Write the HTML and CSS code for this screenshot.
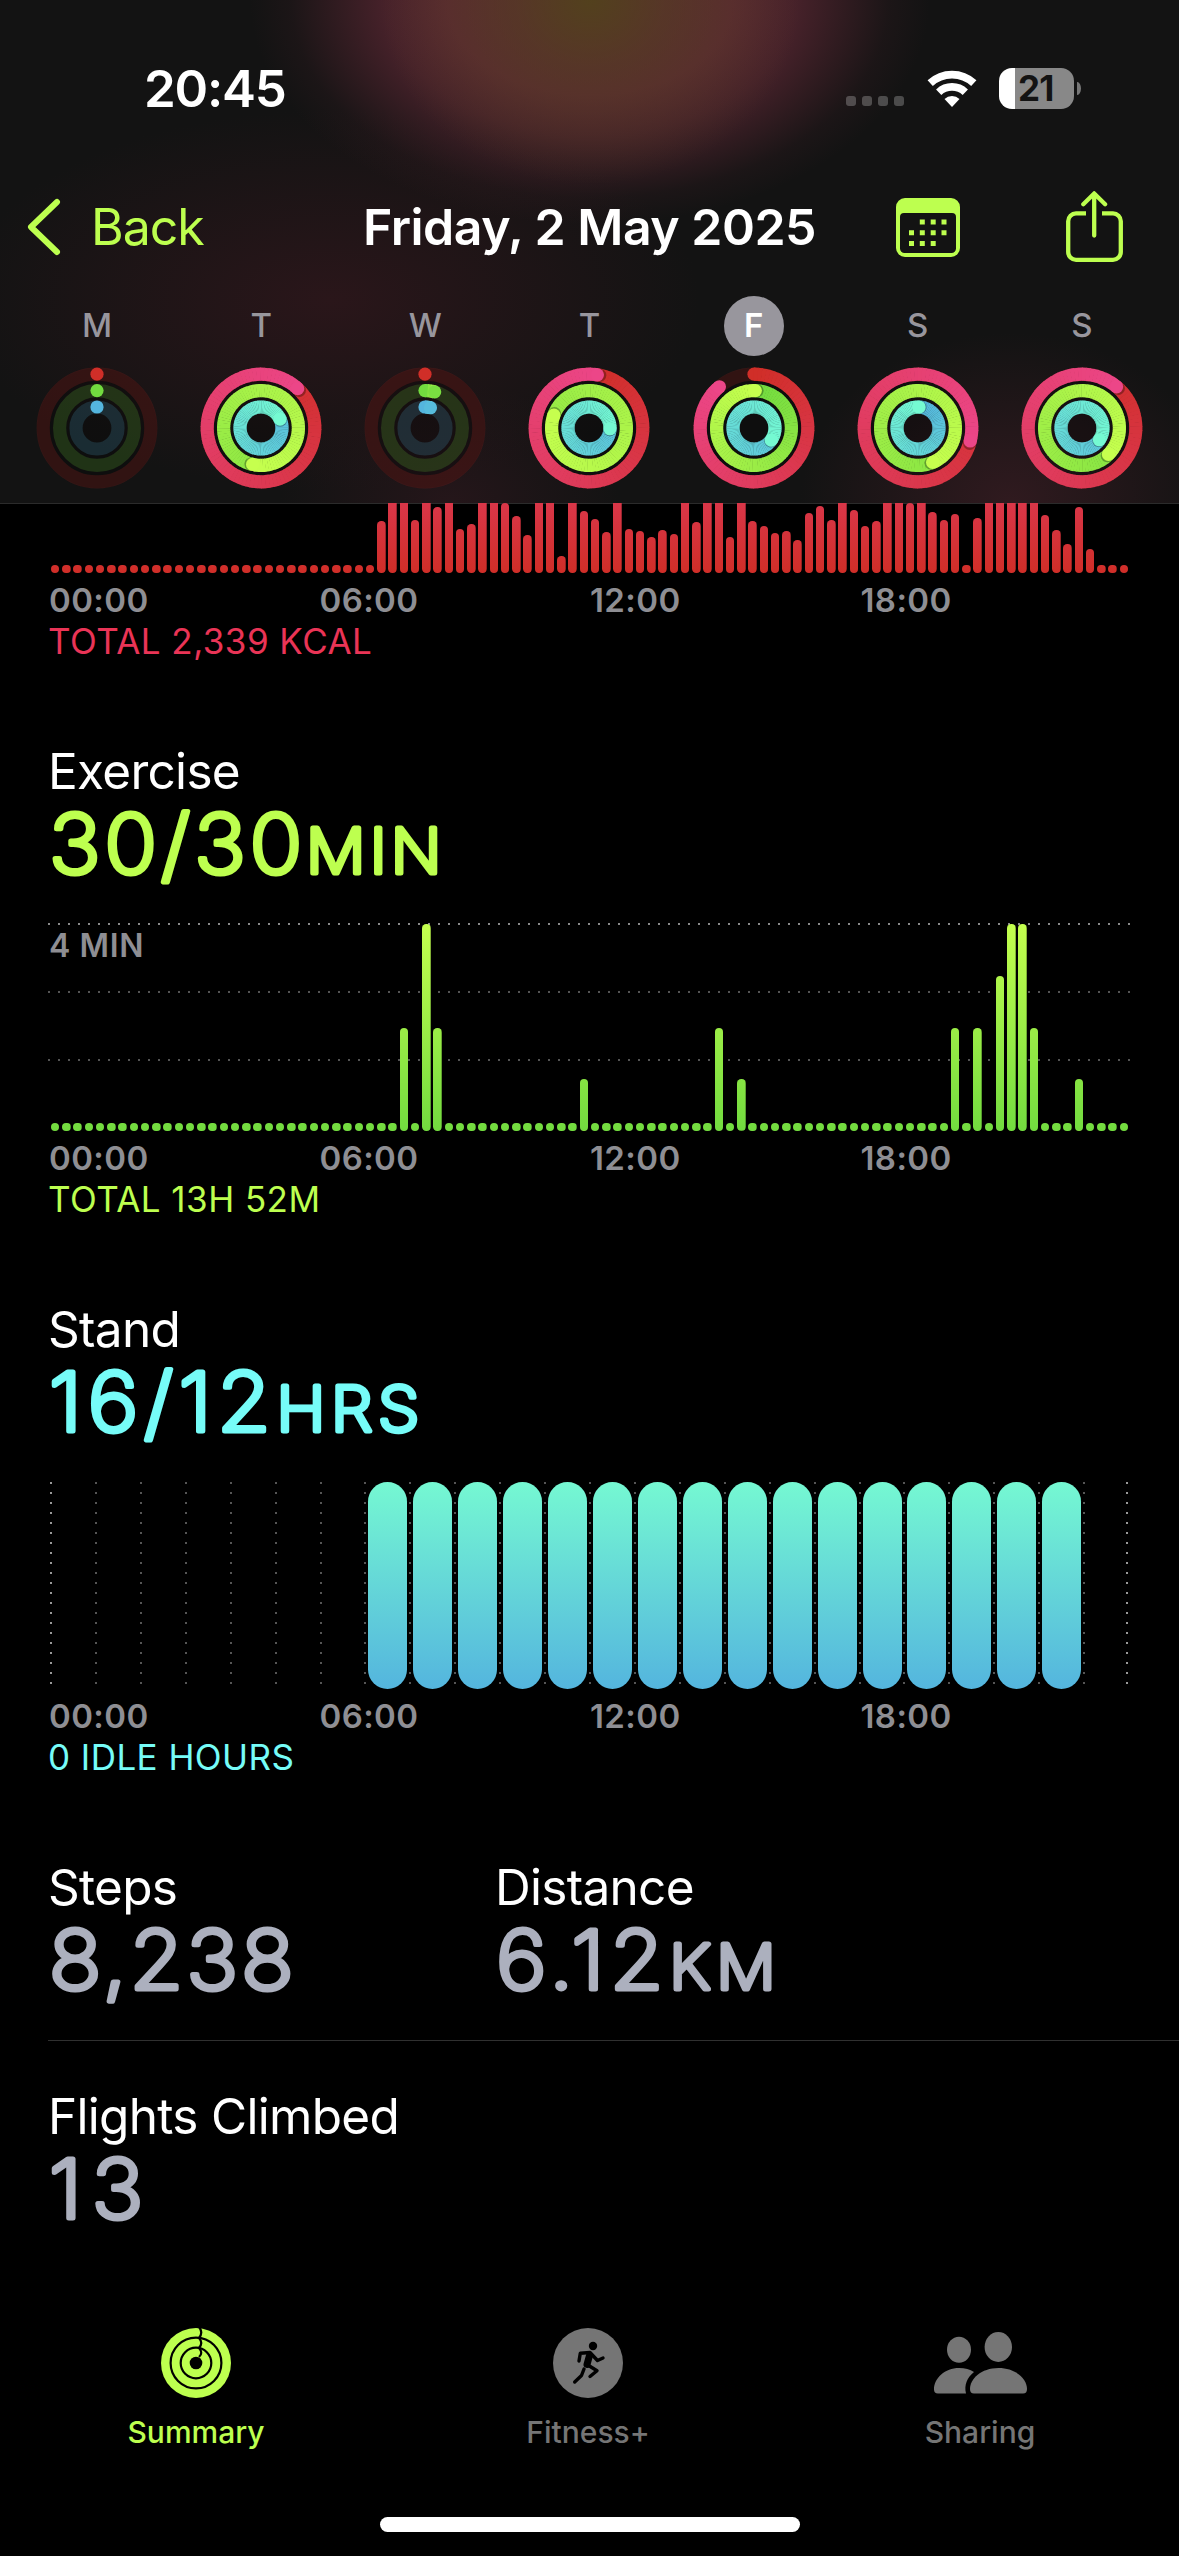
FILE: index.html
```html
<!DOCTYPE html>
<html lang="en">
<head>
  <meta charset="UTF-8">
  <meta name="viewport" content="width=device-width, initial-scale=1.0">
  <title>Activity</title>
  <link rel="stylesheet" href="styles.css">
</head>
<body>
  <header class="header">
    <div class="status-bar">
      <span class="clock">20:45</span>
      <div class="status-icons">
        <div class="signal"><i></i><i></i><i></i><i></i></div>
        <svg class="wifi" viewBox="0 0 50 37" fill="none" stroke="#fff" stroke-width="7.7">
          <path d="M3.2 13.1A32 32 0 0 1 46.8 13.1"/>
          <path d="M11.7 22.2A19.5 19.5 0 0 1 38.3 22.2"/>
          <path d="M25 37L17.5 28.9A10.9 10.9 0 0 1 32.5 28.9Z" fill="#fff" stroke="none"/>
        </svg>
        <div class="battery"><span>21</span></div>
        <div class="battery-tip"></div>
      </div>
    </div>

    <nav class="nav-bar">
      <a class="back">
        <svg viewBox="0 0 34 58" fill="none" stroke="currentColor" stroke-width="6" stroke-linecap="round" stroke-linejoin="round">
          <path d="M30 4L4 29L30 54"/>
        </svg>
        <span>Back</span>
      </a>
      <h1 class="title">Friday, 2 May 2025</h1>
      <div class="nav-icons">
        <svg class="calendar-icon" viewBox="0 0 64 59" fill="currentColor">
          <path fill-rule="evenodd" d="M9 0H55A9 9 0 0 1 64 9V50A9 9 0 0 1 55 59H9A9 9 0 0 1 0 50V9A9 9 0 0 1 9 0ZM8 15A4 4 0 0 0 4 19V50.500A4.500 4.500 0 0 0 8.500 55H55.500A4.500 4.500 0 0 0 60 50.500V19A4 4 0 0 0 56 15Z"/>
          <path d="M23.800 21.500h5v5h-5zM34.700 21.500h5v5h-5zM45.500 21.500h5v5h-5zM13 32.200h5v5h-5zM23.800 32.200h5v5h-5zM34.700 32.200h5v5h-5zM45.500 32.200h5v5h-5zM13 43h5v5h-5zM23.800 43h5v5h-5zM34.700 43h5v5h-5z"/>
        </svg>
        <svg class="share-icon" viewBox="0 0 57 72" fill="none" stroke="currentColor" stroke-width="4.300">
          <path d="M20 22.400H10A7.800 7.800 0 0 0 2.200 30.200V61A7.800 7.800 0 0 0 10 68.800H47A7.800 7.800 0 0 0 54.800 61V30.200A7.800 7.800 0 0 0 47 22.400H36"/>
          <path d="M28.200 44.500V3M17.300 13.300L28.200 2.400L39.100 13.300" stroke-linecap="round" stroke-linejoin="round"/>
        </svg>
      </div>
    </nav>

    <div class="week">
      <div class="day"><span>M</span><svg class="rings" data-rings="0,0,0"></svg></div>
      <div class="day"><span>T</span><svg class="rings" data-rings="403,553,425"></svg></div>
      <div class="day"><span>W</span><svg class="rings" data-rings="0,15,15"></svg></div>
      <div class="day"><span>T</span><svg class="rings" data-rings="369,650,452"></svg></div>
      <div class="day selected"><span>F</span><svg class="rings" data-rings="320,362,485"></svg></div>
      <div class="day"><span>S</span><svg class="rings" data-rings="464,517,363"></svg></div>
      <div class="day"><span>S</span><svg class="rings" data-rings="400,495,484"></svg></div>
    </div>
  </header>

  <main>
    <section class="move">
      <div class="chart bars clipped" id="moveChart"></div>
      <div class="hours"><span>00:00</span><span>06:00</span><span>12:00</span><span>18:00</span></div>
      <p class="total">TOTAL 2,339 KCAL</p>
    </section>

    <section class="exercise">
      <h2>Exercise</h2>
      <svg class="value" height="86"><text x="1" y="72">30/30<tspan class="unit">MIN</tspan></text></svg>
      <div class="chart bars grid-lines" id="exerciseChart"><span class="scale">4 MIN</span></div>
      <div class="hours"><span>00:00</span><span>06:00</span><span>12:00</span><span>18:00</span></div>
      <p class="total">TOTAL 13H 52M</p>
    </section>

    <section class="stand">
      <h2>Stand</h2>
      <svg class="value wide" height="86"><text x="1" y="72">16/12<tspan class="unit">HRS</tspan></text></svg>
      <div class="chart stand-chart" id="standChart"></div>
      <div class="hours"><span>00:00</span><span>06:00</span><span>12:00</span><span>18:00</span></div>
      <p class="total">0 IDLE HOURS</p>
    </section>

    <section class="stats">
      <div class="stat">
        <h2>Steps</h2>
        <svg class="value" height="86"><text x="1" y="72">8,238</text></svg>
      </div>
      <div class="stat">
        <h2>Distance</h2>
        <svg class="value wide" height="86"><text x="1" y="72">6.12<tspan class="unit">KM</tspan></text></svg>
      </div>
    </section>
    <section class="stats last">
      <div class="stat">
        <h2>Flights Climbed</h2>
        <svg class="value wide" height="86"><text x="1" y="72">13</text></svg>
      </div>
    </section>
  </main>

  <footer class="tab-bar">
    <a class="tab active">
      <svg width="70" height="70" viewBox="0 0 70 70">
        <circle cx="35" cy="35" r="35" fill="currentColor"/>
        <g fill="none" stroke="#000" stroke-width="2.200">
          <circle cx="35" cy="35" r="25.400"/>
          <circle cx="35" cy="35" r="15.300"/>
          <path d="M38 -1Q42.500 4.500 38 10M38 10Q42.500 15 38 20M38 20Q42.500 25 38 29"/>
        </g>
        <circle cx="35" cy="35" r="6.300" fill="#000"/>
      </svg>
      <span>Summary</span>
    </a>
    <a class="tab">
      <svg width="70" height="70" viewBox="0 0 70 70">
        <circle cx="35" cy="35" r="35" fill="currentColor"/>
        <circle cx="40" cy="18" r="4.200"/>
        <g fill="none" stroke="#000" stroke-width="3.400" stroke-linecap="round" stroke-linejoin="round">
          <path d="M26 33L27.300 25.300L37 24.500L44.500 32.500L50 30"/>
          <path d="M36.500 27.500L34 36.500" stroke-width="7"/>
          <path d="M34 36.500L44 42.700L37 48.500"/>
          <path d="M31 41L28.500 47.500L21.700 54"/>
        </g>
      </svg>
      <span>Fitness+</span>
    </a>
    <a class="tab">
      <svg width="93" height="70" viewBox="0 -4 93 70" fill="currentColor">
        <ellipse cx="25" cy="17.700" rx="12" ry="13"/>
        <ellipse cx="64.300" cy="15" rx="13.700" ry="15"/>
        <path d="M4 61.500Q0 61.500 0 57.500C0 46 11 36 25 36C31 36 36 37.500 40 40C33 45.500 30 53 32 61.500Z"/>
        <path d="M40 61.500Q36 61.500 36 57C36 47 47 36 64.500 36C82 36 93 47 93 57Q93 61.500 89 61.500Z"/>
      </svg>
      <span>Sharing</span>
    </a>
  </footer>
  <div class="home-indicator"></div>

  <script src="script.js"></script>
</body>
</html>
```
FILE: styles.css
```css
* {
  box-sizing: border-box;
  margin: 0;
  padding: 0;
}

body {
  display: flex;
  flex-direction: column;
  width: 1179px;
  height: 2556px;
  overflow: hidden;
  background: #000;
  color: #fff;
  font-family: Inter, "Liberation Sans", sans-serif;
}

.header {
  height: 503px;
  background:
    radial-gradient(210px 185px at 590px 0, rgba(82, 66, 28, 0.95) 0%, rgba(82, 66, 30, 0.55) 35%, rgba(82, 66, 30, 0) 100%),
    radial-gradient(340px 225px at 590px 0, #5c2832 0%, #5b2733 42%, rgba(91, 39, 51, 0.72) 60%, rgba(91, 39, 51, 0.4) 75%, rgba(91, 39, 51, 0.12) 88%, rgba(91, 39, 51, 0) 100%),
    radial-gradient(370px 190px at 330px 300px, #2a161a 0%, rgba(19, 19, 19, 0) 100%),
    radial-gradient(210px 170px at 1010px 503px, #301a1f 0%, rgba(19, 19, 19, 0) 100%),
    radial-gradient(170px 120px at 450px 503px, #25161a 0%, rgba(19, 19, 19, 0) 100%),
    #131313;
}

/* Status bar */
.status-bar {
  display: flex;
  justify-content: space-between;
  align-items: center;
  height: 176px;
  padding: 0 98px 0 144px;
}

.clock {
  font-size: 51px;
  font-weight: 600;
  letter-spacing: -1.2px;
}

.status-icons {
  display: flex;
  align-items: center;
}

.signal {
  display: flex;
  gap: 6px;
  margin: 26px 23px 0 0;
}

.signal i {
  width: 10px;
  height: 10px;
  border-radius: 3px;
  background: rgba(255, 255, 255, 0.24);
}

.wifi {
  width: 50px;
  height: 37px;
  margin-right: 22px;
}

.battery {
  width: 75px;
  height: 41px;
  padding-left: 19px;
  border-radius: 13px;
  background: linear-gradient(to right, #fff 16px, #888 16px);
  color: #131313;
  font-size: 35px;
  font-weight: 700;
  letter-spacing: -0.8px;
  line-height: 41px;
}

.battery-tip {
  width: 4px;
  height: 13px;
  margin-left: 3px;
  border-radius: 0 4px 4px 0 / 0 7px 7px 0;
  background: #777;
}

/* Navigation bar */
.nav-bar {
  display: grid;
  grid-template-columns: 1fr auto 1fr;
  align-items: center;
  height: 102px;
  padding: 0 27px;
  color: #bdff4f;
}

.back {
  display: flex;
  align-items: center;
  gap: 30px;
  font-size: 50px;
  letter-spacing: -1px;
}

.back svg {
  width: 34px;
  height: 58px;
}

.title {
  color: #fff;
  font-size: 50px;
  font-weight: 600;
  letter-spacing: -0.5px;
}

.nav-icons {
  display: flex;
  justify-content: flex-end;
  align-items: center;
  gap: 106px;
  margin-right: 29px;
}

.calendar-icon {
  width: 64px;
  height: 59px;
}

.share-icon {
  width: 57px;
  height: 72px;
  margin-top: -1px;
}

/* Week rings */
.week {
  display: grid;
  grid-template-columns: repeat(7, 1fr);
  padding: 18px 15px 0;
}

.day {
  display: flex;
  flex-direction: column;
  align-items: center;
  gap: 11px;
}

.day span {
  width: 60px;
  height: 60px;
  border-radius: 50%;
  color: #98969d;
  font-size: 33px;
  font-weight: 500;
  line-height: 59px;
  text-align: center;
}

.day.selected span {
  background: #98969d;
  color: #fff;
  font-weight: 600;
}

.rings {
  width: 122px;
  height: 122px;
}

/* Sections */
main {
  flex: 1;
  border-top: 1px solid #2b2b2b;
}

section {
  padding-left: 48px;
}

.move {
  margin-top: -1px;
}

.exercise,
.stand,
.stats {
  padding-top: 79px;
}

h2 {
  height: 60px;
  font-size: 49.5px;
  font-weight: 400;
  letter-spacing: -0.7px;
  line-height: 60px;
}

/* Round joins give the numbers their soft corners */
.value {
  display: block;
  width: 450px;
  overflow: visible;
  fill: currentColor;
  stroke: currentColor;
  stroke-width: 5px;
  stroke-linejoin: round;
  font-size: 81px;
  font-weight: 200;
  letter-spacing: 3px;
}

.value text {
  transform: scaleX(1.07);
}

.exercise .value {
  letter-spacing: 3.8px;
}

.value.wide {
  letter-spacing: 5.3px;
}

.last .value {
  letter-spacing: 9px;
}

.unit {
  font-size: 62px;
  font-weight: 250;
}

.move .total {
  color: #ea3456;
}

.exercise .value,
.exercise .total {
  color: #bdff4f;
}

.stand .value,
.stand .total {
  color: #76fcf8;
}

.stats .value {
  color: #acb0be;
}

/* Charts */
.chart {
  position: relative;
  width: 1082px;
  height: 207px;
  margin-top: 37px;
}

.bars {
  display: flex;
  justify-content: space-between;
  align-items: flex-end;
  padding: 0 1.8px 0 2.9px;
}

.bar {
  width: 8.4px;
  min-height: 8px;
  border-radius: 4.2px;
  background-position: bottom;
  background-size: 100% 207px;
}

.clipped {
  height: 70px;
  margin-top: 0;
  overflow: hidden;
}

.move .bar {
  flex-shrink: 0;
  background-image: linear-gradient(to top, #d02e28, #ec4688);
}

.exercise .bar {
  background-image: linear-gradient(to top, #72db3f, #c4ff4e);
}

.grid-lines {
  height: 208px;
  margin-top: 36px;
  background:
    repeating-linear-gradient(to right, #8a8a8a 0 2px, transparent 2px 10px) 0 0 / 100% 2px no-repeat,
    repeating-linear-gradient(to right, #555 0 2px, transparent 2px 10px) 0 68px / 100% 2px no-repeat,
    repeating-linear-gradient(to right, #555 0 2px, transparent 2px 10px) 0 136px / 100% 2px no-repeat;
}

.scale {
  position: absolute;
  top: 3px;
  left: 1px;
  color: #8e8e93;
  font-size: 32px;
  font-weight: 600;
  letter-spacing: 0.6px;
  line-height: 40px;
}

.stand-chart {
  display: grid;
  grid-template-columns: repeat(24, 1fr);
  width: 1080px;
  padding-left: 2px;
}

.hour {
  padding-left: 4px;
  background: repeating-linear-gradient(to bottom, #555 0 2px, transparent 2px 10px) 0 0 / 2px 100% no-repeat;
}

.hour:first-child {
  background-image: repeating-linear-gradient(to bottom, #999 0 2px, transparent 2px 10px);
}

.hour:last-child {
  background:
    repeating-linear-gradient(to bottom, #555 0 2px, transparent 2px 10px) 0 0 / 2px 100% no-repeat,
    repeating-linear-gradient(to bottom, #999 0 2px, transparent 2px 10px) 100% 0 / 2px 100% no-repeat;
}

.hour.stood::before {
  content: "";
  display: block;
  width: 39px;
  height: 207px;
  border-radius: 19.5px;
  background: linear-gradient(to top, #54b5de, #75f8d2);
}

.hours {
  display: grid;
  grid-template-columns: repeat(4, 270.5px);
  margin-top: 7px;
  padding-left: 1px;
  color: #8e8e93;
  font-size: 33px;
  font-weight: 600;
  letter-spacing: 0.4px;
  line-height: 40px;
}

.total {
  font-size: 35px;
  letter-spacing: 0.45px;
  line-height: 42px;
}

/* Stats */
.stats {
  display: grid;
  grid-template-columns: 447px 1fr;
  padding-bottom: 38px;
  background: linear-gradient(#303030, #303030) 48px 100% / 100% 1px no-repeat;
}

.stats.last {
  padding-top: 45px;
  background: none;
}

/* Tab bar */
.tab-bar {
  display: grid;
  grid-template-columns: repeat(3, 1fr);
  height: 189px;
  padding-right: 3px;
}

.tab {
  display: flex;
  flex-direction: column;
  align-items: center;
  gap: 14px;
  color: #757575;
  font-size: 30px;
  font-weight: 500;
  line-height: 40px;
}

.tab.active {
  color: #bdff4f;
}

.home-indicator {
  width: 420px;
  height: 15px;
  margin: 0 auto 24px;
  border-radius: 8px;
  background: #fff;
}
```
FILE: script.js
```js
// bar heights in px, one per 15 minutes; 0 is drawn as a dot
const move = [
  ...Array(29).fill(0),
  52, 130, 125, 53, 140, 66, 120, 44, 49, 118, 112, 70, 57, 38, 110, 124, 17, 100, 62,
  54, 41, 120, 44, 42, 36, 43, 39, 104, 51, 110, 96, 36, 98, 52, 47, 40, 42, 33,
  60, 67, 53, 90, 63, 47, 52, 112, 120, 70, 95, 61, 53, 59, 0, 55, 120, 140, 160, 130, 110,
  58, 43, 29, 66, 24, 0, 0, 0
];

const exercise = Array(96).fill(0);
const minutes = { 31: 2, 33: 4, 34: 2, 47: 1, 59: 2, 61: 1, 80: 2, 82: 2, 84: 3, 85: 4, 86: 4, 87: 2, 91: 1 };
for (const i in minutes) {
  exercise[i] = minutes[i] * 51.75;
}

function drawBars(id, values) {
  const chart = document.getElementById(id);
  values.forEach(value => {
    const bar = document.createElement('div');
    bar.className = 'bar';
    bar.style.height = value + 'px';
    chart.appendChild(bar);
  });
}

function drawStand() {
  const chart = document.getElementById('standChart');
  for (let hour = 0; hour < 24; hour++) {
    const cell = document.createElement('div');
    cell.className = hour >= 7 && hour <= 22 ? 'hour stood' : 'hour';
    chart.appendChild(cell);
  }
}

const ringStyles = [
  { radius: 53.8, from: [208, 46, 40], to: [236, 70, 136] },
  { radius: 37.4, from: [114, 219, 63], to: [198, 255, 78] },
  { radius: 21, from: [84, 181, 222], to: [117, 250, 210] }
];

function mix(a, b, t) {
  return 'rgb(' + a.map((v, i) => Math.round(v + (b[i] - v) * t)).join(',') + ')';
}

function point(radius, angle) {
  const rad = angle * Math.PI / 180;
  return (radius * Math.sin(rad)).toFixed(2) + ' ' + (-radius * Math.cos(rad)).toFixed(2);
}

function cap(radius, angle, color, extra) {
  const [x, y] = point(radius, angle).split(' ');
  return `<circle cx="${x}" cy="${y}" r="6.6" fill="${color}" ${extra || ''}/>`;
}

// angle is the total sweep in degrees, more than 360 when the goal is passed
function drawRing({ radius, from, to }, angle) {
  let out = `<circle r="${radius}" fill="none" stroke="${mix(from, to, 0)}" stroke-opacity="0.18" stroke-width="13.2"/>`;
  const start = Math.max(0, angle - 360);
  if (angle <= 360) {
    out += cap(radius, 0, mix(from, to, 0));
  }
  for (let a = start; a < angle; a += 4) {
    const end = Math.min(a + 4.6, angle);
    out += `<path d="M${point(radius, a)}A${radius} ${radius} 0 0 1 ${point(radius, end)}" fill="none" stroke="${mix(from, to, a / angle)}" stroke-width="13.2"/>`;
  }
  if (angle > 0) {
    const color = mix(from, to, angle > 60 ? 1 : 0.1);
    if (angle > 360) {
      out += cap(radius, angle + 2.5, '#000', 'fill-opacity="0.3"');
    }
    out += cap(radius, angle, color);
  }
  return out;
}

document.querySelectorAll('.rings').forEach(svg => {
  const values = svg.dataset.rings.split(',').map(Number);
  svg.setAttribute('viewBox', '-61 -61 122 122');
  svg.innerHTML = '<circle r="60" fill="#000" fill-opacity="0.25"/>' +
    ringStyles.map((style, i) => drawRing(style, values[i])).join('');
});

drawBars('moveChart', move);
drawBars('exerciseChart', exercise);
drawStand();
```
